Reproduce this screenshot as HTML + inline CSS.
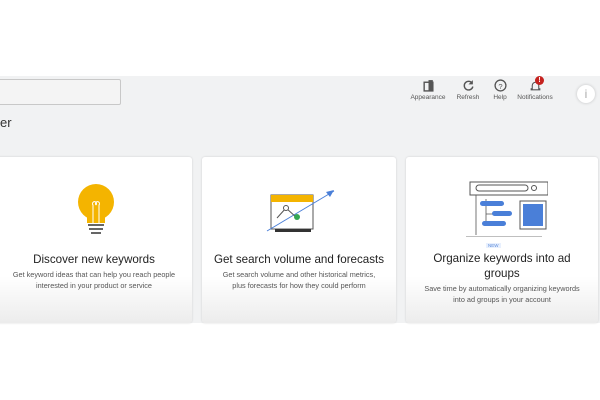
<!DOCTYPE html>
<html><head><style>
body{margin:0;width:600px;height:400px;background:#fff;font-family:"Liberation Sans",sans-serif;position:relative;overflow:hidden}
.band{position:absolute;left:0;top:76px;width:600px;height:247px;background:#f1f2f3}
.search{position:absolute;left:-2px;top:79px;width:121px;height:24px;border:1px solid #c8c8c8;border-radius:2px;background:#f4f4f4}
.er{position:absolute;left:0;top:115px;font-size:13px;color:#333}
.tb{position:absolute;top:79px;font-size:6.5px;color:#555;text-align:center}
.tb svg{display:block;margin:0 auto 2px}
.card{position:absolute;top:157px;height:166px;background:linear-gradient(#fff 0,#fff 72%,#ececec 100%);border-radius:3px;box-shadow:0 0 2px rgba(0,0,0,.15);text-align:center}
.t{font-size:11.6px;color:#222;line-height:15px}
.d{font-size:7.3px;color:#555;line-height:11px;margin-top:2px}
</style></head><body>
<div class="band"></div>
<div class="search"></div>
<div class="er">er</div>
<div class="tb" style="left:408px;width:40px"><svg width="13" height="13" viewBox="0 0 12 12"><rect x="2" y="3" width="8" height="8" fill="none" stroke="#555" stroke-width="1.3"/><rect x="6" y="1" width="4" height="10" fill="#555"/></svg>Appearance</div>
<div class="tb" style="left:454px;width:28px"><svg width="13" height="13" viewBox="0 0 12 12"><path d="M9.5 4A4 4 0 1 0 10 7" fill="none" stroke="#555" stroke-width="1.3"/><path d="M10 1v4H6z" fill="#555"/></svg>Refresh</div>
<div class="tb" style="left:489px;width:22px"><svg width="13" height="13" viewBox="0 0 12 12"><circle cx="6" cy="6" r="5" fill="none" stroke="#555" stroke-width="1.2"/><text x="6" y="9" font-size="7" text-anchor="middle" fill="#555" font-family="Liberation Sans">?</text></svg>Help</div>
<div class="tb" style="left:515px;width:40px"><svg width="13" height="13" viewBox="0 0 12 12"><path d="M3 9V6a3 3 0 0 1 6 0v3h1v1H2V9z" fill="none" stroke="#555" stroke-width="1"/></svg>Notifications</div>
<div style="position:absolute;left:535px;top:76px;width:9px;height:9px;border-radius:50%;background:#c5221f;color:#fff;font-size:7px;line-height:9px;text-align:center;font-weight:bold">!</div>
<div style="position:absolute;left:577px;top:85px;width:18px;height:18px;border-radius:50%;background:#fff;box-shadow:0 0 3px rgba(0,0,0,.2);color:#aaa;font-size:12px;line-height:18px;text-align:center">i</div>

<div class="card" style="left:-4px;width:196px">
<svg style="position:absolute;left:81px;top:26px" width="38" height="64" viewBox="0 0 38 64"><circle cx="19" cy="19" r="18" fill="#f4b400"/><path d="M10 28h18v12H10z" fill="#f4b400"/><path d="M16 40V22a2 2 0 1 1 3 0M22 40V22a2 2 0 1 0-3 0" fill="none" stroke="#fff" stroke-width="1"/><rect x="11" y="41" width="16" height="2" fill="#666"/><rect x="12" y="45" width="14" height="2" fill="#666"/><rect x="14" y="49" width="10" height="2" fill="#666"/></svg>
<div style="padding-top:95px" class="t">Discover new keywords</div>
<div class="d">Get keyword ideas that can help you reach people<br>interested in your product or service</div></div>

<div class="card" style="left:202px;width:194px">
<svg style="position:absolute;left:60px;top:30px" width="76" height="52" viewBox="0 0 76 50"><rect x="9" y="7" width="42" height="34" fill="#fff" stroke="#555" stroke-width="1"/><rect x="9" y="7" width="42" height="7" fill="#f4b400"/><rect x="13" y="41" width="36" height="3" fill="#333"/><path d="M5 43L72 3" stroke="#4a7fd8" stroke-width="1"/><path d="M72 2l-8 2 4 5z" fill="#4a7fd8"/><path d="M15 30l9-10 11 10" fill="none" stroke="#555" stroke-width="1"/><circle cx="24" cy="20" r="2.5" fill="#fff" stroke="#555"/><circle cx="35" cy="29" r="3" fill="#34a853"/></svg>
<div style="padding-top:95px" class="t">Get search volume and forecasts</div>
<div class="d">Get search volume and other historical metrics,<br>plus forecasts for how they could perform</div></div>

<div class="card" style="left:406px;width:192px">
<svg style="position:absolute;left:58px;top:24px" width="84" height="56" viewBox="0 0 84 56"><rect x="6" y="1" width="78" height="13" fill="#fff" stroke="#555"/><rect x="12" y="4" width="52" height="6" rx="3" fill="none" stroke="#555"/><circle cx="70" cy="7" r="2.5" fill="none" stroke="#555"/><path d="M12 14v40M2 56h76M22 18v25M22 23h18M22 33h18" stroke="#555" stroke-width=".8" fill="none"/><rect x="16" y="20" width="24" height="5" rx="2.5" fill="#4a7fd8"/><rect x="28" y="30" width="20" height="5" rx="2.5" fill="#4a7fd8"/><rect x="18" y="40" width="24" height="5" rx="2.5" fill="#4a7fd8"/><rect x="56" y="20" width="26" height="28" fill="#fff" stroke="#555"/><rect x="59" y="23" width="20" height="22" fill="#4a7fd8"/></svg>
<div style="position:absolute;left:80px;top:86px;font-size:4.5px;color:#5b8ad8;background:#e8f0fe;padding:0 2px">NEW</div>
<div style="padding-top:94px" class="t">Organize keywords into ad<br>groups</div>
<div class="d">Save time by automatically organizing keywords<br>into ad groups in your account</div></div>
</body></html>
